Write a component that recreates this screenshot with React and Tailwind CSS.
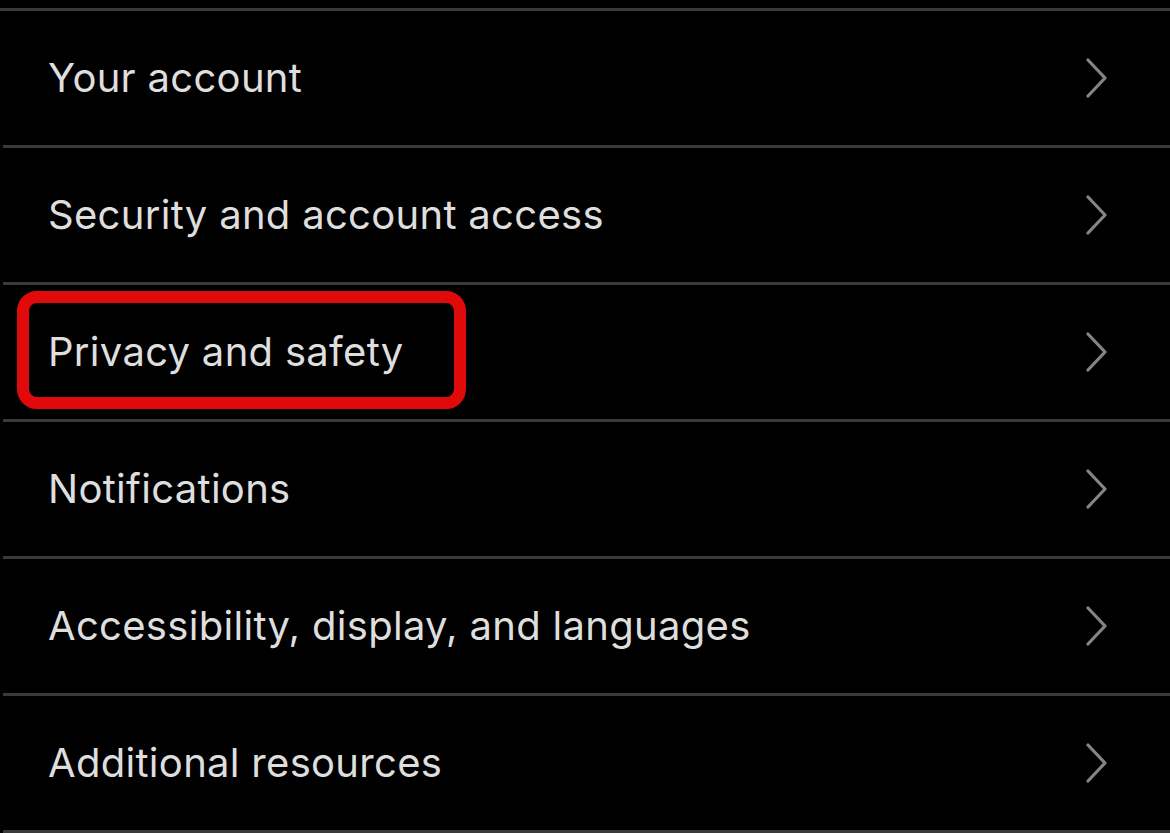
import React from "react";

const items = [
  "Your account",
  "Security and account access",
  "Privacy and safety",
  "Notifications",
  "Accessibility, display, and languages",
  "Additional resources",
];

function Chevron() {
  return (
    <svg width="24" height="40" viewBox="0 0 24 40" fill="none" className="shrink-0">
      <path d="M4 2 L21 20 L4 38" stroke="#858585" strokeWidth="3.2" strokeLinecap="round" strokeLinejoin="round" />
    </svg>
  );
}

export default function App() {
  return (
    <div
      className="w-[1170px] h-[833px] bg-black overflow-hidden pt-2"
      style={{ fontFamily: "Inter, 'Noto Sans', sans-serif" }}
    >
      <div className="h-[3px] bg-[#3a3a3a]" />
      {items.map((label, i) => (
        <div key={label}>
          <div className="relative h-[134px] flex items-center pl-[48px] pr-[62px]">
            <span className="flex-1 text-[40px] leading-none text-[#dedede] tracking-[0.3px]">{label}</span>
            <Chevron />
            {i === 2 && (
              <div className="absolute left-[17px] top-[6px] w-[449px] h-[118px] border-[12px] border-[#e00a0a] rounded-[20px]" />
            )}
          </div>
          <div className="ml-[3px] h-[3px] bg-[#3a3a3a]" />
        </div>
      ))}
    </div>
  );
}
